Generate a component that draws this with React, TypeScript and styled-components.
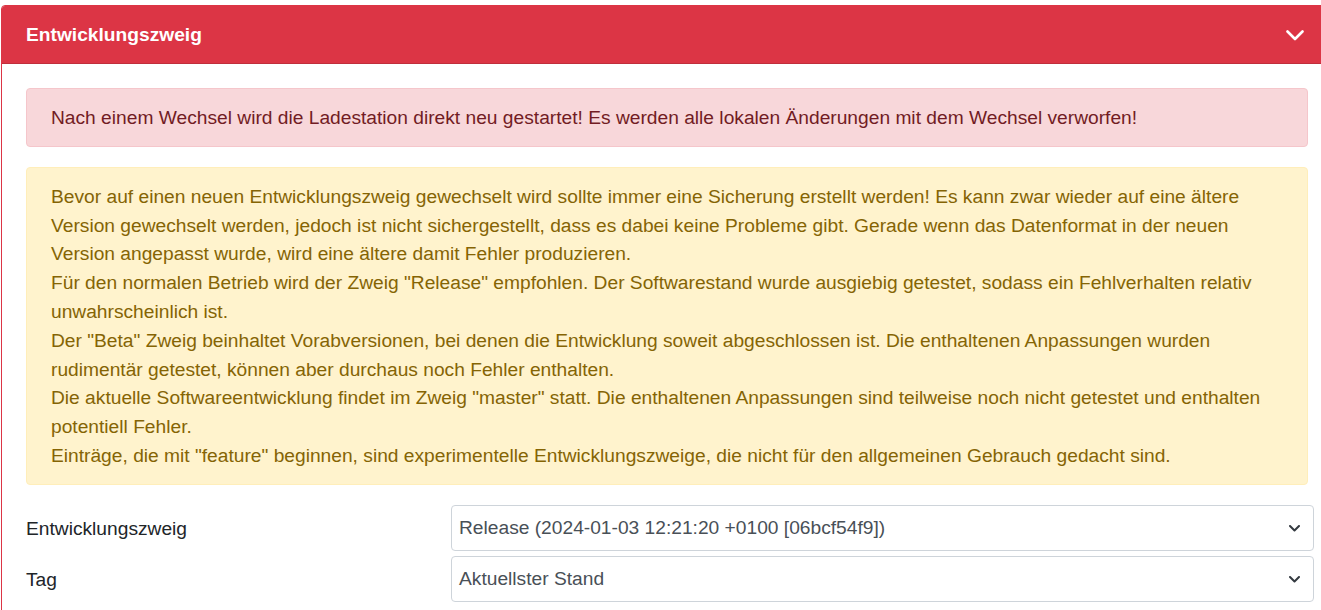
import React from "react";
import styled, { createGlobalStyle } from "styled-components";

const GlobalStyle = createGlobalStyle`
  html, body {
    margin: 0;
    padding: 0;
    overflow: hidden;
    background: #ffffff;
  }
  body {
    font-family: "Liberation Sans", Arial, sans-serif;
    font-size: 19.2px;
    line-height: 1.5;
    color: #212529;
  }
  * { box-sizing: border-box; }
`;

const Page = styled.div`
  padding: 5px 0 0 1px;
  width: 1340px;
`;

const Card = styled.section`
  width: 1332px;
  border: 1px solid #dc3545;
  border-radius: 4px;
  background: #fff;
`;

const CardHeader = styled.header`
  display: flex;
  align-items: center;
  justify-content: space-between;
  height: 58px;
  padding: 1px 28px 0 24px;
  background: #dc3545;
  color: #fff;
  border-bottom: 1px solid rgba(0, 0, 0, 0.125);
  border-radius: 3px 3px 0 0;
`;

const Title = styled.h2`
  margin: 0;
  font-size: 19.2px;
  font-weight: bold;
  line-height: 1.5;
`;

const CardBody = styled.div`
  padding: 24px 24px 8px 24px;
  display: flex;
  flex-direction: column;
`;

const Alert = styled.div<{ $variant: "danger" | "warning" }>`
  padding: 15px 24px 13px;
  border: 1px solid ${(p) => (p.$variant === "danger" ? "#f5c6cb" : "#ffeeba")};
  background: ${(p) => (p.$variant === "danger" ? "#f8d7da" : "#fff3cd")};
  color: ${(p) => (p.$variant === "danger" ? "#721c24" : "#856404")};
  border-radius: 4px;
  margin-bottom: 20px;
  white-space: nowrap;
`;

const FormRow = styled.div`
  display: grid;
  grid-template-columns: 425px 1fr;
  align-items: center;
  margin-right: -6px;
  margin-bottom: 5px;
`;

const Label = styled.label`
  color: #212529;
  padding-top: 3px;
`;

const SelectBox = styled.div`
  display: flex;
  align-items: center;
  justify-content: space-between;
  height: 46px;
  padding: 2px 13px 0 7px;
  border: 1px solid #ced4da;
  border-radius: 4px;
  color: #495057;
  background: #fff;
`;

const HeaderChevron = () => (
  <svg width="18" height="11" viewBox="0 0 18 11" fill="none">
    <polyline
      points="1.5,1.5 9,9 16.5,1.5"
      stroke="#fff"
      strokeWidth="2.6"
      strokeLinecap="round"
      strokeLinejoin="round"
    />
  </svg>
);

const SelectChevron = () => (
  <svg width="11" height="7" viewBox="0 0 11 7" fill="none">
    <polyline
      points="1,1 5.5,5.5 10,1"
      stroke="#343a40"
      strokeWidth="2"
      strokeLinecap="round"
      strokeLinejoin="round"
    />
  </svg>
);

export default function App() {
  return (
    <>
      <GlobalStyle />
      <Page>
        <Card>
          <CardHeader>
            <Title>Entwicklungszweig</Title>
            <HeaderChevron />
          </CardHeader>
          <CardBody>
            <Alert $variant="danger">
              Nach einem Wechsel wird die Ladestation direkt neu gestartet! Es werden alle lokalen Änderungen mit dem Wechsel verworfen!
            </Alert>
            <Alert $variant="warning">
              Bevor auf einen neuen Entwicklungszweig gewechselt wird sollte immer eine Sicherung erstellt werden! Es kann zwar wieder auf eine ältere
              <br />
              Version gewechselt werden, jedoch ist nicht sichergestellt, dass es dabei keine Probleme gibt. Gerade wenn das Datenformat in der neuen
              <br />
              Version angepasst wurde, wird eine ältere damit Fehler produzieren.
              <br />
              Für den normalen Betrieb wird der Zweig "Release" empfohlen. Der Softwarestand wurde ausgiebig getestet, sodass ein Fehlverhalten relativ
              <br />
              unwahrscheinlich ist.
              <br />
              Der "Beta" Zweig beinhaltet Vorabversionen, bei denen die Entwicklung soweit abgeschlossen ist. Die enthaltenen Anpassungen wurden
              <br />
              rudimentär getestet, können aber durchaus noch Fehler enthalten.
              <br />
              Die aktuelle Softwareentwicklung findet im Zweig "master" statt. Die enthaltenen Anpassungen sind teilweise noch nicht getestet und enthalten
              <br />
              potentiell Fehler.
              <br />
              Einträge, die mit "feature" beginnen, sind experimentelle Entwicklungszweige, die nicht für den allgemeinen Gebrauch gedacht sind.
            </Alert>
            <FormRow>
              <Label>Entwicklungszweig</Label>
              <SelectBox>
                <span>Release (2024-01-03 12:21:20 +0100 [06bcf54f9])</span>
                <SelectChevron />
              </SelectBox>
            </FormRow>
            <FormRow>
              <Label>Tag</Label>
              <SelectBox>
                <span>Aktuellster Stand</span>
                <SelectChevron />
              </SelectBox>
            </FormRow>
          </CardBody>
        </Card>
      </Page>
    </>
  );
}
